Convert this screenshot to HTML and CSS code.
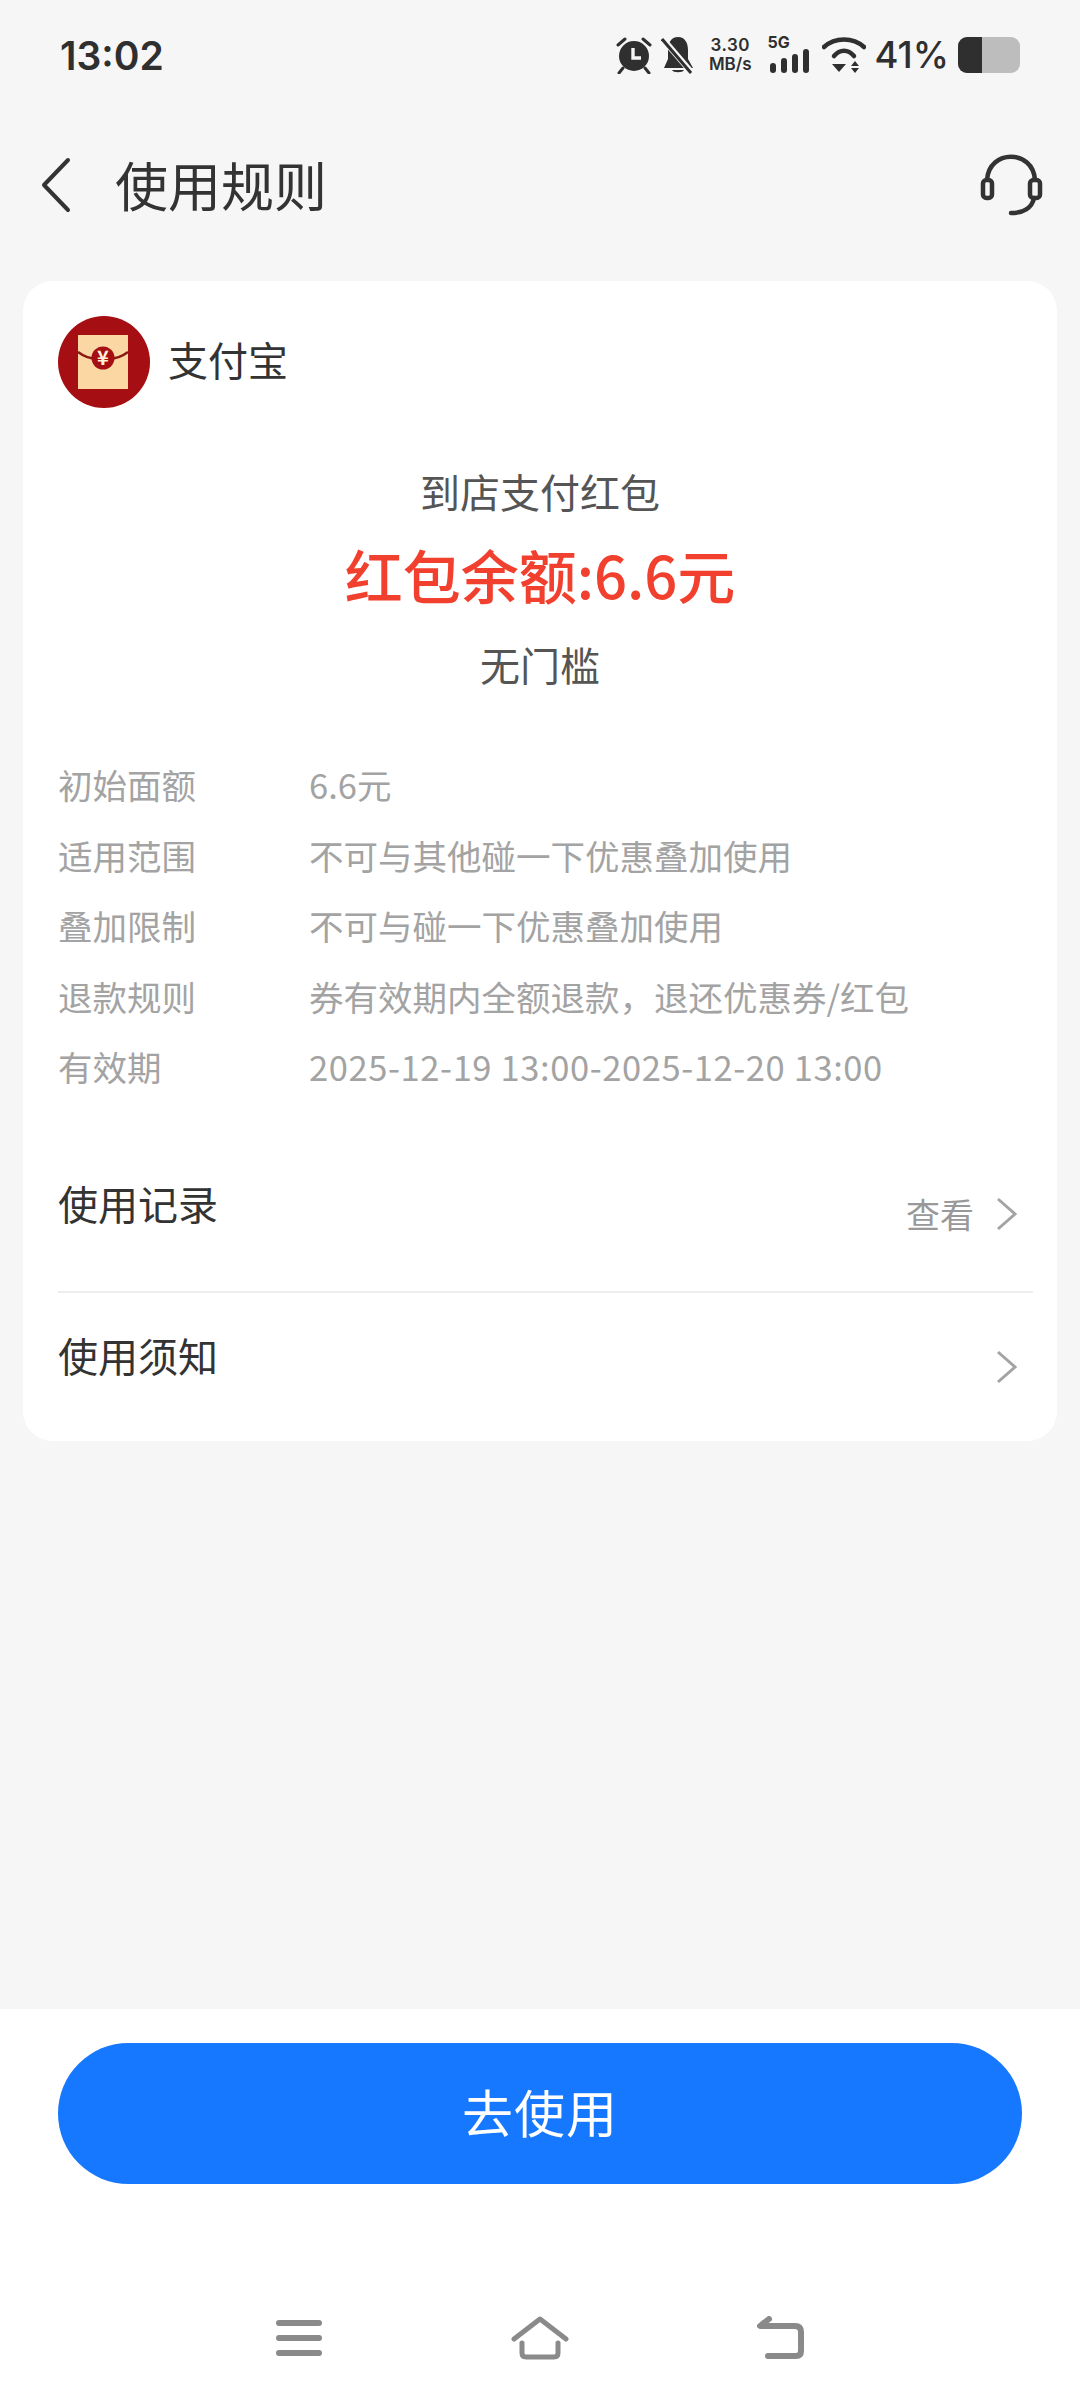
FILE: index.html
```html
<!DOCTYPE html>
<html lang="zh-CN">
<head>
    <meta charset="UTF-8">
    <meta name="viewport" content="width=device-width, initial-scale=1.0">
    <title>使用规则</title>
    <link rel="stylesheet" href="styles.css">
</head>
<body>
<div class="page">
    <div class="statusbar">
        <span class="time">13:02</span>
        <div class="status-icons">
            <svg class="ic-alarm" width="38" height="38" viewBox="0 0 38 38">
                <circle cx="19" cy="20" r="15" fill="#2f2f2f"/>
                <path d="M3 9 L10 3 M35 9 L28 3 M8 32 L4 37 M30 32 L34 37" stroke="#2f2f2f" stroke-width="3" stroke-linecap="round" fill="none"/>
                <path d="M18 12 V22 H26" stroke="#f6f6f6" stroke-width="3.4" fill="none"/>
            </svg>
            <svg class="ic-bell" width="34" height="38" viewBox="0 0 34 38">
                <path d="M17 1 C24 1 27 7 27 14 V23 L32 32 H3 L7 23 V14 C7 7 10 1 17 1 Z M11 34 H23 C22 37 12 37 11 34 Z" fill="#2f2f2f"/>
                <path d="M1 2 L31 37" stroke="#f6f6f6" stroke-width="6"/>
                <path d="M1 3 L30 37" stroke="#2f2f2f" stroke-width="3"/>
            </svg>
            <div class="speed"><span>3.30</span><span>MB/s</span></div>
            <div class="signal">
                <span class="net">5G</span>
                <svg width="41" height="25" viewBox="0 0 41 25">
                    <rect x="0" y="14" width="6" height="10" rx="3" fill="#2f2f2f"/>
                    <rect x="11" y="9" width="6" height="15" rx="3" fill="#2f2f2f"/>
                    <rect x="22" y="5" width="6" height="19" rx="3" fill="#2f2f2f"/>
                    <rect x="33" y="0" width="6" height="24" rx="3" fill="#2f2f2f"/>
                </svg>
            </div>
            <svg class="ic-wifi" width="44" height="38" viewBox="0 0 44 38">
                <path d="M2 11 C13 1 31 1 42 11" stroke="#2f2f2f" stroke-width="4.5" fill="none" stroke-linecap="round"/>
                <path d="M12 20 C18 13 26 13 32 20" stroke="#2f2f2f" stroke-width="4.5" fill="none" stroke-linecap="round"/>
                <path d="M17 28 H31 L24 36 Z M36 30 L40 25 L44 30 Z M36 32 H44 L40 37 Z" fill="#2f2f2f" transform="translate(-7 0)"/>
            </svg>
            <span class="batt-text">41%</span>
            <div class="battery"><div class="battery-level"></div></div>
        </div>
    </div>

    <header class="topbar">
        <svg class="back" width="36" height="56" viewBox="0 0 36 56">
            <path d="M30 3 L6 28 L30 53" stroke="#333" stroke-width="4" fill="none" stroke-linecap="round" stroke-linejoin="round"/>
        </svg>
        <h1 class="title">使用规则</h1>
        <svg class="service" width="66" height="62" viewBox="0 0 66 62">
            <path d="M9 26 C11 -5 55 -5 57 26" stroke="#333" stroke-width="4.5" fill="none"/>
            <rect x="5" y="26" width="9" height="18" rx="3.5" fill="none" stroke="#333" stroke-width="4.5"/>
            <rect x="52" y="26" width="10" height="18" rx="3.5" fill="none" stroke="#333" stroke-width="4.5"/>
            <path d="M56 44 C54 54 45 59 33 59" stroke="#333" stroke-width="4.5" fill="none" stroke-linecap="round"/>
        </svg>
    </header>

    <main class="card">
        <div class="brand">
            <svg class="brand-logo" width="92" height="92" viewBox="0 0 92 92">
                <circle cx="46" cy="46" r="46" fill="#a50e12"/>
                <rect x="20" y="19" width="50" height="54" fill="#fbd7a4"/>
                <path d="M20 36 C28 42 36 44 45 42 C54 44 62 42 70 36" stroke="#8a1a14" stroke-width="2.5" fill="none"/>
                <circle cx="45" cy="42" r="11.5" fill="#a50e12"/>
                <text x="45" y="49" class="yen">¥</text>
            </svg>
            <span class="brand-name">支付宝</span>
        </div>

        <div class="summary">
            <div class="sum-type">到店支付红包</div>
            <div class="sum-amount">红包余额:6.6元</div>
            <div class="sum-limit">无门槛</div>
        </div>

        <dl class="rules">
            <div class="rule"><dt>初始面额</dt><dd>6.6元</dd></div>
            <div class="rule"><dt>适用范围</dt><dd>不可与其他碰一下优惠叠加使用</dd></div>
            <div class="rule"><dt>叠加限制</dt><dd>不可与碰一下优惠叠加使用</dd></div>
            <div class="rule"><dt>退款规则</dt><dd>券有效期内全额退款，退还优惠券/红包</dd></div>
            <div class="rule"><dt>有效期</dt><dd class="rule-date">2025-12-19 13:00-2025-12-20 13:00</dd></div>
        </dl>

        <div class="link-row first">
            <span class="link-name">使用记录</span>
            <span class="link-more">查看</span>
            <svg class="chevron" width="22" height="34" viewBox="0 0 22 34">
                <path d="M2 2 L19 17 L2 32" stroke="#a3a3a3" stroke-width="3" fill="none"/>
            </svg>
        </div>
        <div class="link-row last">
            <span class="link-name">使用须知</span>
            <svg class="chevron" width="22" height="34" viewBox="0 0 22 34">
                <path d="M2 2 L19 17 L2 32" stroke="#a3a3a3" stroke-width="3" fill="none"/>
            </svg>
        </div>
    </main>

    <footer class="footer">
        <button class="use-btn">去使用</button>
        <div class="navbar">
            <svg width="46" height="38" viewBox="0 0 46 38">
                <path d="M3 4 H43 M3 19 H43 M3 34 H43" stroke="#8a8a8a" stroke-width="6" stroke-linecap="round"/>
            </svg>
            <svg width="58" height="44" viewBox="0 0 58 44">
                <path d="M3 23 L29 3 L55 23" stroke="#8a8a8a" stroke-width="5" fill="none" stroke-linecap="round" stroke-linejoin="round"/>
                <path d="M11 27 V37 Q11 41 15 41 H43 Q47 41 47 37 V27" stroke="#8a8a8a" stroke-width="5" fill="none" stroke-linecap="round"/>
            </svg>
            <svg width="48" height="44" viewBox="0 0 48 44">
                <path d="M12 3 L3 10 H38 Q44 10 44 16 V35 Q44 40 39 40 H11" stroke="#8a8a8a" stroke-width="6" fill="none" stroke-linecap="round" stroke-linejoin="round"/>
            </svg>
        </div>
    </footer>
</div>
</body>
</html>
```

FILE: styles.css
```css
* {
    margin: 0;
    padding: 0;
    box-sizing: border-box;
}
body {
    font-family: "Noto Sans CJK SC", "Noto Sans", sans-serif;
    background-color: #f6f6f6;
}
.page {
    width: 1080px;
    height: 2400px;
    display: flex;
    flex-direction: column;
}

/* status bar */
.statusbar {
    height: 110px;
    padding: 0 60px;
    display: flex;
    justify-content: space-between;
    align-items: center;
    color: #2f2f2f;
}
.time {
    font-family: "Inter", sans-serif;
    font-size: 39px;
    font-weight: 600;
}
.status-icons {
    display: flex;
    align-items: center;
    height: 38px;
}
.ic-alarm {
    margin-right: 8px;
}
.speed {
    display: flex;
    flex-direction: column;
    margin-left: 14px;
    font-family: "Inter", sans-serif;
    font-size: 17px;
    font-weight: 600;
    line-height: 19px;
    align-items: center;
}
.speed span:first-child {
    letter-spacing: 0.5px;
}
.signal {
    margin-left: 17px;
    width: 42px;
    height: 38px;
    position: relative;
}
.signal svg {
    position: absolute;
    right: 0;
    bottom: 0;
}
.net {
    position: absolute;
    left: -1px;
    top: -4px;
    font-family: "Inter", sans-serif;
    font-size: 16px;
    font-weight: 700;
}
.ic-wifi {
    margin-left: 11px;
}
.batt-text {
    font-family: "Inter", sans-serif;
    font-size: 36.5px;
    font-weight: 500;
    margin-left: 9px;
    line-height: 38px;
}
.battery {
    width: 62px;
    height: 36px;
    margin-left: 9px;
    background-color: #bdbdbd;
    border-radius: 9px;
    overflow: hidden;
}
.battery-level {
    width: 24px;
    height: 100%;
    background-color: #2f2f2f;
}

/* title */
.topbar {
    height: 150px;
    padding: 0 36px 0 38px;
    display: flex;
    align-items: center;
}
.title {
    font-size: 53px;
    font-weight: 400;
    color: #333;
    margin-left: 41px;
    flex: 1;
    line-height: 70px;
    padding-bottom: 3px;
}

/* card */
.card {
    margin: 21px 23px 0;
    height: 1160px;
    background-color: #fff;
    border-radius: 30px;
    padding: 35px 24px 0 35px;
}
.brand {
    display: flex;
    align-items: center;
    gap: 18px;
}
.brand-name {
    font-size: 40px;
    line-height: 60px;
    color: #333;
    padding-bottom: 6px;
}
.yen {
    font-size: 20px;
    font-weight: 700;
    fill: #fff0d8;
    text-anchor: middle;
}
.summary {
    margin-top: 53px;
    margin-left: -35px;
    margin-right: -24px;
    text-align: center;
}
.sum-type, .sum-limit {
    font-size: 40px;
    line-height: 60px;
    color: #555;
}
.sum-amount {
    font-size: 58px;
    line-height: 86px;
    font-weight: 500;
    color: #f2402f;
    margin: 10px 0 17px;
}
.rules {
    margin-top: 55px;
}
.rule {
    display: flex;
    height: 70.5px;
    align-items: center;
    font-size: 34.5px;
    color: #a3a3a3;
}
.rule dt {
    width: 251px;
}
.rule-date {
    letter-spacing: 0.6px;
}
.link-row {
    display: flex;
    align-items: center;
    padding-right: 15px;
}
.link-row.first {
    margin-top: 33px;
    border-bottom: 2px solid #eeeeee;
    height: 158px;
    padding-bottom: 20px;
}
.link-row.last {
    height: 151px;
    padding-bottom: 26px;
}
.link-name {
    font-size: 40px;
    color: #333;
    flex: 1;
}
.link-more {
    font-size: 34px;
    color: #999;
    margin-right: 22px;
    transform: translateY(11px);
}
.chevron {
    transform: translateY(11px);
}
.link-row.last .chevron {
    transform: translateY(12px);
}

/* bottom */
.footer {
    margin-top: auto;
    height: 391px;
    background-color: #fff;
    padding: 34px 58px 0;
}
.use-btn {
    display: block;
    width: 964px;
    height: 141px;
    border: none;
    border-radius: 71px;
    background-color: #1677ff;
    color: #fff;
    font-family: inherit;
    font-size: 51px;
    letter-spacing: 1px;
    padding-bottom: 6px;
}
.navbar {
    margin: 132px 0 0;
    padding: 0 217px 0 218px;
    display: flex;
    justify-content: space-between;
    align-items: center;
}
```
